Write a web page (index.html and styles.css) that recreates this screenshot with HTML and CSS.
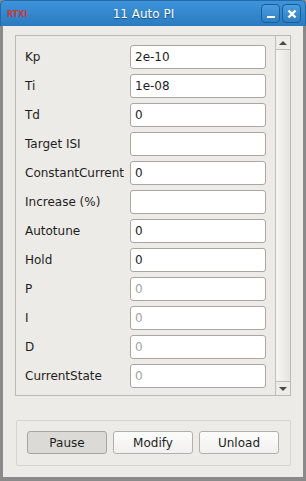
FILE: index.html
```html
<!DOCTYPE html>
<html lang="en">
<head>
  <meta charset="UTF-8">
  <meta name="viewport" content="width=device-width, initial-scale=1.0">
  <title>11 Auto PI</title>
  <link rel="stylesheet" href="styles.css">
</head>
<body>
  <div class="window">
    <!-- Title bar -->
    <header class="titlebar">
      <span class="app-name">RTXI</span>
      <span class="title">11 Auto PI</span>
      <div class="win-buttons">
        <span class="win-btn">
          <svg width="12" height="12" viewBox="0 0 12 12"><rect x="2" y="8" width="8" height="2" fill="#fff"/></svg>
        </span>
        <span class="win-btn">
          <svg width="12" height="12" viewBox="0 0 12 12"><path d="M2.5 2.5 L9.5 9.5 M9.5 2.5 L2.5 9.5" stroke="#fff" stroke-width="2.4"/></svg>
        </span>
      </div>
    </header>

    <!-- Parameters -->
    <div class="content">
      <div class="param-frame">
        <div class="param-list">
          <div class="row"><label>Kp</label><input type="text" value="2e-10"></div>
          <div class="row"><label>Ti</label><input type="text" value="1e-08"></div>
          <div class="row"><label>Td</label><input type="text" value="0"></div>
          <div class="row"><label>Target ISI</label><input type="text" value=""></div>
          <div class="row"><label>ConstantCurrent</label><input type="text" value="0"></div>
          <div class="row"><label>Increase (%)</label><input type="text" value=""></div>
          <div class="row"><label>Autotune</label><input type="text" value="0"></div>
          <div class="row"><label>Hold</label><input type="text" value="0"></div>
          <div class="row"><label>P</label><input type="text" value="0" class="readonly" readonly></div>
          <div class="row"><label>I</label><input type="text" value="0" class="readonly" readonly></div>
          <div class="row"><label>D</label><input type="text" value="0" class="readonly" readonly></div>
          <div class="row"><label>CurrentState</label><input type="text" value="0" class="readonly" readonly></div>
        </div>
        <div class="scrollbar">
          <span class="arrow up"></span>
          <span class="track"></span>
          <span class="arrow down"></span>
        </div>
      </div>

      <!-- Buttons -->
      <div class="button-box">
        <button class="btn pressed">Pause</button>
        <button class="btn">Modify</button>
        <button class="btn">Unload</button>
      </div>
    </div>
  </div>
</body>
</html>
```

FILE: styles.css
```css
/* Base */
* {
  margin: 0;
  padding: 0;
  box-sizing: border-box;
}

body {
  font-family: "DejaVu Sans", sans-serif;
  font-size: 12px;
  color: #1e1e1e;
  background-color: #edebe7;
  width: 306px;
  height: 481px;
  overflow: hidden;
}

/* Window */
.window {
  width: 306px;
  height: 481px;
  display: flex;
  flex-direction: column;
  background-color: #edebe7;
  border-left: 3px solid #8a8a8a;
  border-right: 3px solid #8a8a8a;
  border-bottom: 4px solid #8a8a8a;
}

.titlebar {
  height: 26px;
  margin: 0 -3px;
  display: flex;
  align-items: center;
  position: relative;
  background: linear-gradient(#3d94da, #2b7bc0);
  border: 1px solid #246aa6;
  border-bottom: none;
  border-radius: 5px 5px 0 0;
}

.app-name {
  color: #c8383c;
  font-size: 8px;
  font-weight: bold;
  margin-left: 6px;
  margin-top: 2px;
}

.title {
  position: absolute;
  left: 0;
  right: 19px;
  text-align: center;
  color: #fff;
  font-size: 12px;
  text-shadow: 0 1px 1px #1b4f80;
  pointer-events: none;
}

.win-buttons {
  margin-left: auto;
  margin-right: 4px;
  display: flex;
  gap: 2px;
}

.win-btn {
  width: 19px;
  height: 19px;
  border: 1px solid #1d5d95;
  border-radius: 4px;
  background: linear-gradient(#4a9ee0, #2f7fc3);
  display: flex;
  align-items: center;
  justify-content: center;
}

/* Content */
.content {
  flex: 1;
  display: flex;
  flex-direction: column;
  padding: 9px 12px 0 12px;
}

.param-frame {
  height: 361px;
  display: flex;
  border: 1px solid #bdbab5;
}

.param-list {
  flex: 1;
  padding: 9px 9px 0 9px;
  display: flex;
  flex-direction: column;
  gap: 5px;
}

.row {
  display: flex;
  align-items: center;
  height: 24px;
}

.row label {
  width: 105px;
  font-size: 12px;
  color: #1e1e1e;
}

.row input {
  width: 136px;
  height: 24px;
  border: 1px solid #aaa7a2;
  border-radius: 3px;
  background-color: #fff;
  padding: 0 4px;
  font-family: "DejaVu Sans", sans-serif;
  font-size: 12px;
  color: #1e1e1e;
  outline: none;
}

.row input.readonly {
  color: #a3a3a3;
}

/* Scrollbar */
.scrollbar {
  width: 15px;
  display: flex;
  flex-direction: column;
  border-left: 1px solid #c2bfba;
  background-color: #eeece8;
}

.scrollbar .arrow {
  height: 14px;
  display: flex;
  align-items: center;
  justify-content: center;
}

.scrollbar .arrow.up {
  border-bottom: 1px solid #c2bfba;
}

.scrollbar .arrow.down {
  border-top: 1px solid #c2bfba;
}

.scrollbar .arrow.up::after {
  content: '';
  border-left: 4px solid transparent;
  border-right: 4px solid transparent;
  border-bottom: 4px solid #4a4a4a;
}

.scrollbar .arrow.down::after {
  content: '';
  border-left: 4px solid transparent;
  border-right: 4px solid transparent;
  border-top: 4px solid #4a4a4a;
}

.scrollbar .track {
  flex: 1;
  background: linear-gradient(to right, #f7f6f4, #e6e4e0);
}

/* Bottom buttons */
.button-box {
  margin: 24px 0 0 1px;
  width: 275px;
  height: 46px;
  border: 1px solid #d8d5d0;
  border-radius: 2px;
  padding: 10px 0 0 10px;
  display: flex;
  gap: 6px;
}

.btn {
  width: 80px;
  height: 23px;
  border: 1px solid #b3b0ab;
  border-radius: 3px;
  background: linear-gradient(#fcfcfb, #f1f0ee);
  font-family: "DejaVu Sans", sans-serif;
  font-size: 12px;
  color: #1e1e1e;
}

.btn.pressed {
  background: #dcdad6;
  border-color: #a9a6a1;
}
```
